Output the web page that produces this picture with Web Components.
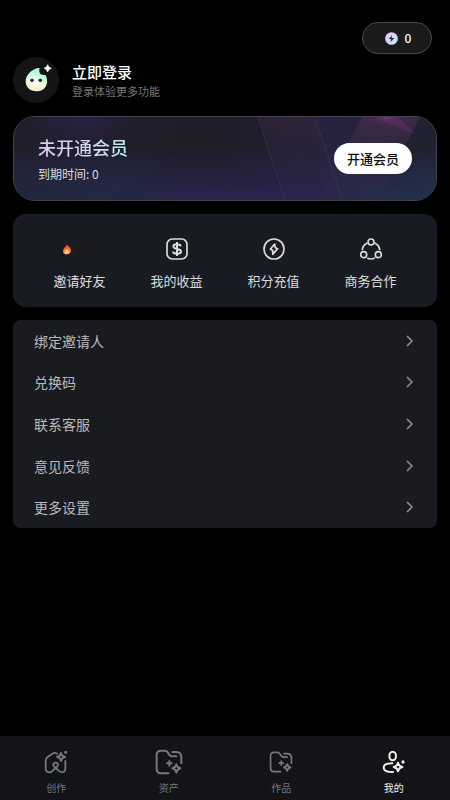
<!DOCTYPE html>
<html lang="zh-CN">
<head>
<meta charset="utf-8">
<meta name="viewport" content="width=device-width, initial-scale=1">
<title>我的</title>
<style>
html, body { margin: 0; background: #000; }
body { font-family: "Noto Sans CJK SC", sans-serif; color: #fff; }
</style>
</head>
<body>
<profile-page></profile-page>

<template id="t-page">
<style>
:host { display: flex; flex-direction: column; min-height: 100vh; box-sizing: border-box; }
main { flex: 1; display: flex; flex-direction: column; gap: 13px; padding: 22px 13px 13px; }
.top { display: flex; flex-direction: column; gap: 3px; }
</style>
<main>
  <div class="top">
    <points-pill>0</points-pill>
    <user-header><span slot="name">立即登录</span><span slot="hint">登录体验更多功能</span></user-header>
  </div>
  <member-card><span slot="title">未开通会员</span><span slot="date">到期时间: 0</span><span slot="action">开通会员</span></member-card>
  <quick-grid>
    <quick-item icon="fire">邀请好友</quick-item>
    <quick-item icon="dollar">我的收益</quick-item>
    <quick-item icon="bolt">积分充值</quick-item>
    <quick-item icon="share">商务合作</quick-item>
  </quick-grid>
  <menu-list>
    <menu-row>绑定邀请人</menu-row>
    <menu-row>兑换码</menu-row>
    <menu-row>联系客服</menu-row>
    <menu-row>意见反馈</menu-row>
    <menu-row>更多设置</menu-row>
  </menu-list>
</main>
<tab-bar>
  <tab-item icon="create">创作</tab-item>
  <tab-item icon="assets">资产</tab-item>
  <tab-item icon="works">作品</tab-item>
  <tab-item icon="mine" active>我的</tab-item>
</tab-bar>
</template>

<template id="t-pill">
<style>
:host { display: flex; justify-content: flex-end; padding-right: 5px; }
button { display: flex; align-items: center; justify-content: center; gap: 7px; width: 70px; height: 32px; padding: 0 0 0 2px; box-sizing: border-box; border: 1px solid #49494b; border-radius: 16px; background: #1a1a1b; color: #fff; font: 500 12px/16px "Noto Sans CJK SC", sans-serif; }
svg { width: 13px; height: 13px; }
</style>
<button type="button" aria-label="积分"><svg viewBox="0 0 39 39"><defs><linearGradient id="g" x1="0" y1="0" x2="1" y2="1"><stop offset="0" stop-color="#e3c9f7"/><stop offset=".5" stop-color="#d5d9fa"/><stop offset="1" stop-color="#b4f1f7"/></linearGradient></defs><circle cx="19.500" cy="19.500" r="19" fill="url(#g)"/><path d="M21 10 11 21h7l-1 9 11-12h-8z" fill="#272438"/></svg><span><slot></slot></span></button>
</template>

<template id="t-user">
<style>
:host { display: block; }
a { display: flex; align-items: center; gap: 13px; color: inherit; text-decoration: none; }
.avatar { flex: none; width: 46px; height: 46px; border-radius: 50%; background: #141415; }
.text { display: flex; flex-direction: column; gap: 1px; }
.name { font-size: 15px; line-height: 20px; font-weight: 500; }
.hint { font-size: 11px; line-height: 16px; color: #777; }
</style>
<a href="#login">
<svg class="avatar" viewBox="0 0 138 138"><defs><linearGradient id="b" x1=".65" y1="0" x2=".35" y2="1"><stop offset="0" stop-color="#aaf2df"/><stop offset=".4" stop-color="#c9f9dd"/><stop offset=".7" stop-color="#f5f6cf"/><stop offset="1" stop-color="#ffe2d2"/></linearGradient><radialGradient id="w"><stop offset="0" stop-color="#fff"/><stop offset="1" stop-color="#fff" stop-opacity="0"/></radialGradient></defs>
<path d="M80 33C77 44 80 52 88 53C94 54 98 53 99 57C102 64 103 70 102 77C99 94 87 103 70 103C51 103 38 91 38 73C38 56 51 44 62 38C69 34 74 33 80 33Z" fill="url(#b)"/><ellipse cx="68" cy="74" rx="27" ry="22" fill="url(#w)"/><circle cx="57" cy="70" r="5.500" fill="#302e2b"/><circle cx="82" cy="70" r="5.500" fill="#302e2b"/><path d="M104 23Q106 32 115 34Q106 36 104 45Q102 36 93 34Q102 32 104 23Z" fill="#fff" stroke="#fff" stroke-width="2"/></svg>
<span class="text"><span class="name"><slot name="name"></slot></span><span class="hint"><slot name="hint"></slot></span></span>
</a>
</template>

<template id="t-member">
<style>
:host { position: relative; display: flex; align-items: center; justify-content: space-between; min-height: 85px; box-sizing: border-box; padding: 0 24px; border: 1px solid #42414c; border-radius: 22px; overflow: hidden; background: #1f1e29; }
.art { position: absolute; inset: 0; width: 100%; height: 100%; }
.text { position: relative; display: flex; flex-direction: column; gap: 5px; }
.title { font-size: 18px; line-height: 26px; font-weight: 500; background: linear-gradient(100deg, #e6c9f8, #d4d4f6 50%, #b9f1f5); -webkit-background-clip: text; background-clip: text; color: transparent; }
.date { font-size: 12px; line-height: 18px; color: #ddd; }
button { position: relative; height: 31px; padding: 0 13px; border: 0; border-radius: 16px; background: #fff; color: #111; font: 500 13px/18px "Noto Sans CJK SC", sans-serif; }
</style>
<svg class="art" viewBox="0 0 424 85" preserveAspectRatio="none" aria-hidden="true"><defs>
<linearGradient id="base"><stop offset="0" stop-color="#201f2b"/><stop offset=".5" stop-color="#1f1d28"/><stop offset=".75" stop-color="#232135"/><stop offset="1" stop-color="#202130"/></linearGradient>
<linearGradient id="low" x1="0" y1="0" x2="0" y2="1"><stop offset=".35" stop-color="#28244e" stop-opacity="0"/><stop offset="1" stop-color="#29244e"/></linearGradient>
<linearGradient id="cyan"><stop offset="0" stop-color="#202838"/><stop offset=".25" stop-color="#202a40" stop-opacity=".8"/><stop offset=".4" stop-color="#202b42" stop-opacity="0"/><stop offset=".7" stop-color="#203551" stop-opacity="0"/><stop offset="1" stop-color="#203347"/></linearGradient>
<linearGradient id="cy" x1="0" y1="0" x2="0" y2="1"><stop offset=".4" stop-color="#000"/><stop offset="1" stop-color="#fff"/></linearGradient>
<mask id="m"><rect width="424" height="85" fill="url(#cy)"/></mask>
<radialGradient id="violet"><stop offset="0" stop-color="#302354"/><stop offset="1" stop-color="#302354" stop-opacity="0"/></radialGradient>
<radialGradient id="pink"><stop offset="0" stop-color="#8a3796"/><stop offset=".35" stop-color="#5c2d66" stop-opacity=".6"/><stop offset="1" stop-color="#492948" stop-opacity="0"/></radialGradient>
<linearGradient id="beam" x1="0" y1="0" x2="0" y2="1"><stop offset="0" stop-color="#4c2f4e" stop-opacity=".75"/><stop offset="1" stop-color="#352b4c" stop-opacity=".2"/></linearGradient>
</defs>
<rect width="424" height="85" fill="url(#base)"/><ellipse cx="70" cy="0" rx="60" ry="32" fill="url(#violet)" opacity=".6"/>
<rect width="424" height="85" fill="url(#low)"/><rect width="424" height="85" fill="url(#cyan)" mask="url(#m)"/>
<path d="M245 0H302L330 85H272Z" fill="url(#beam)" opacity=".35"/><path d="M302 0H350L318 60Z" fill="#302554" opacity=".35"/><path d="M350 0H408L364 85H305Z" fill="url(#beam)" opacity=".85"/>
<path d="M245 0 272 85M302 0 330 85" stroke="#5a4c68" stroke-opacity=".3" fill="none"/>
<path d="M363 0H386L404 18Q386 12 363 0Z" fill="#7e3688" opacity=".3"/>
<ellipse cx="374" cy="0" rx="26" ry="12" fill="url(#pink)" opacity=".8"/>
<g fill="none" stroke="#545578" stroke-opacity=".45" stroke-dasharray="1 4"><path d="M68 75Q90 72 112 75"/><path d="M190 77Q220 73 252 77"/><path d="M340 75Q370 73 400 78"/></g></svg>
<div class="text"><div class="title"><slot name="title"></slot></div><div class="date"><slot name="date"></slot></div></div>
<button type="button"><slot name="action"></slot></button>
</template>

<template id="t-quick-grid">
<style>:host { display: grid; grid-template-columns: repeat(4, 1fr); padding: 8px 18px 0; min-height: 93px; box-sizing: border-box; border-radius: 13px; background: #191b23; }</style>
<slot></slot>
</template>

<template id="t-quick-item">
<style>
:host { display: flex; }
button { flex: 1; display: flex; flex-direction: column; align-items: center; justify-content: center; gap: 11px; padding: 0; border: 0; background: none; color: #ddd; font: 400 13px/20px "Noto Sans CJK SC", sans-serif; }
svg { height: 22px; display: block; }
</style>
<button type="button"><span class="icon"></span><span><slot></slot></span></button>
</template>

<template id="t-menu-list">
<style>:host { display: grid; grid-auto-rows: 1fr; min-height: 208px; border-radius: 7px; background: #1a1a21; }</style>
<slot></slot>
</template>

<template id="t-menu-row">
<style>
:host { display: flex; }
button { flex: 1; display: flex; align-items: center; justify-content: space-between; padding: 0 21px; border: 0; background: none; color: #bbb; font: 400 14px/20px "Noto Sans CJK SC", sans-serif; }
svg { width: 12px; height: 12px; }
</style>
<button type="button"><span><slot></slot></span><svg viewBox="0 0 12 12" fill="none" stroke="#909093" stroke-width="1.500"><path d="M3 1 8 6 3 11"/></svg></button>
</template>

<template id="t-tab-bar">
<style>:host { position: sticky; bottom: 0; display: block; background: #131418; } nav { display: grid; grid-template-columns: repeat(4, 1fr); min-height: 64px; }</style>
<nav><slot></slot></nav>
</template>

<template id="t-tab-item">
<style>
:host { display: flex; color: #77777a; }
:host([active]) { color: #eee; }
a { flex: 1; display: flex; flex-direction: column; align-items: center; gap: 4px; padding-top: 12px; color: inherit; text-decoration: none; font-size: 10px; line-height: 16px; }
.icon { display: flex; align-items: center; height: 28px; }
svg { display: block; }
</style>
<a href="#"><span class="icon"></span><span><slot></slot></span></a>
</template>

<script>
const folder = `<path d="M40 73H18Q5 73 5 60V18Q5 5 18 5H29Q36 5 40 13Q44 22 52 22H64"/><path d="M52 9H63Q79 9 79 25V43"/><path d="M43 36V50M36 43H50"/><path d="M64 46Q66 56 76 58Q66 60 64 71Q62 60 52 58Q62 56 64 46Z"/>`;
const ICONS = {
  fire: `<svg width="39" viewBox="0 0 117 66"><defs><radialGradient id="glow"><stop offset="0" stop-color="#532019"/><stop offset="1" stop-color="#211a20" stop-opacity="0"/></radialGradient><linearGradient id="f" x1="0" y1="0" x2="0" y2="1"><stop offset="0" stop-color="#d93c28"/><stop offset=".55" stop-color="#f47838"/><stop offset="1" stop-color="#ffbd62"/></linearGradient></defs><rect x="2" y="13" width="113" height="40" rx="4" fill="#1b1a20"/><rect x="2" y="13" width="46" height="40" rx="4" fill="url(#glow)"/><path d="M20 19C24 23 30 28 32 34C34 45 27 49 20 49C12 49 8 43 10 36C11 31 13 32 14 28C17 28 19 24 20 19Z" fill="url(#f)"/><path d="M21 33C27 39 28 46 20 47C13 46 15 39 21 33Z" fill="#ffd581"/></svg>`,
  dollar: `<svg width="22" viewBox="0 0 66 66" fill="none" stroke="#ddd" stroke-width="5"><rect x="3" y="3" width="60" height="60" rx="16"/><path stroke-width="6" d="M44 25Q43 19 33 19Q22 19 22 25Q22 31 33 33Q45 35 45 41Q45 47 33 47Q22 47 21 41M33 12V54"/></svg>`,
  bolt: `<svg width="22" viewBox="0 0 66 66" fill="none" stroke="#ddd" stroke-width="5" stroke-linejoin="round"><circle cx="33" cy="33" r="30"/><path d="M35 18 22 34 29 37 29 49 44 32 37 29Z"/></svg>`,
  share: `<svg width="22" viewBox="0 0 66 66" fill="none" stroke="#ddd" stroke-width="5"><circle cx="33" cy="12" r="9"/><circle cx="11" cy="50" r="9"/><circle cx="55" cy="50" r="9"/><path d="M22 15Q7 22 7 37M44 15Q59 22 59 37M22 60Q33 66 44 60"/></svg>`,
  create: `<svg width="24" height="24" viewBox="0 0 72 72" fill="none" stroke="currentColor" stroke-width="5.500" stroke-linecap="round" stroke-linejoin="round"><path d="M39 11Q32 6 25 11L10 22Q5 26 5 33V55Q5 67 15 67C25 67 30 57 37 52C45 46 43 38 35 38C27 38 25 46 33 52C40 57 44 67 54 67Q64 67 64 55V33"/><path d="M51 9Q53 19 63 21Q53 23 51 33Q49 23 39 21Q49 19 51 9Z"/><circle cx="65" cy="7" r="2" fill="currentColor"/></svg>`,
  assets: `<svg width="28" height="26" viewBox="0 0 84 78" fill="none" stroke="currentColor" stroke-width="6" stroke-linecap="round" stroke-linejoin="round">${folder}</svg>`,
  works: `<svg width="24" height="22" viewBox="0 0 84 78" fill="none" stroke="currentColor" stroke-width="6" stroke-linecap="round" stroke-linejoin="round">${folder}</svg>`,
  mine: `<svg width="24" height="24" viewBox="0 0 72 72" fill="none" stroke="currentColor" stroke-width="6" stroke-linecap="round" stroke-linejoin="round"><ellipse cx="32" cy="18" rx="10" ry="13"/><path d="M31 40C13 40 5 46 5 53C5 62 17 66 33 66"/><path d="M48 38Q50 49 61 51Q50 53 48 64Q46 53 35 51Q46 49 48 38Z"/><circle cx="63" cy="36" r="2" fill="currentColor"/></svg>`
};

class Base extends HTMLElement {
  connectedCallback() {
    if (this.shadowRoot) return;
    const root = this.attachShadow({ mode: 'open' });
    root.append(document.getElementById(this.constructor.template).content.cloneNode(true));
    const holder = root.querySelector('.icon');
    if (holder) holder.innerHTML = ICONS[this.getAttribute('icon')];
    if (this.hasAttribute('active')) root.querySelector('a').setAttribute('aria-current', 'page');
  }
}
const define = (name, template) => customElements.define(name, class extends Base { static template = template; });
define('points-pill', 't-pill');
define('user-header', 't-user');
define('member-card', 't-member');
define('quick-item', 't-quick-item');
define('quick-grid', 't-quick-grid');
define('menu-row', 't-menu-row');
define('menu-list', 't-menu-list');
define('tab-item', 't-tab-item');
define('tab-bar', 't-tab-bar');
define('profile-page', 't-page');
</script>
</body>
</html>
